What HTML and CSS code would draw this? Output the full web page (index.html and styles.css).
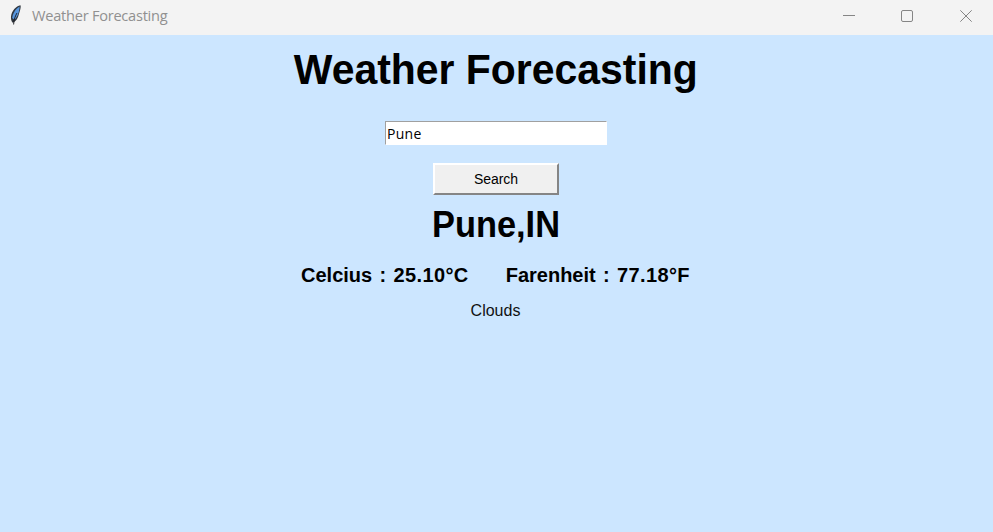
FILE: index.html
```html
<!DOCTYPE html>
<html lang="en">
<head>
<meta charset="utf-8">
<title>Weather Forecasting</title>
<link rel="stylesheet" href="styles.css">
</head>
<body>
<header class="titlebar">
  <svg class="feather" width="14" height="22" viewBox="0 0 14 22">
    <path d="M11.500 1.200C7 1.800 2.600 7 2 12.500c-.2 2.500.3 5 1.700 6.300 1.800-.5 4.800-3.300 5.800-7.300C10.500 8 12.300 3.500 11.500 1.200Z" fill="#30363e"/>
    <path d="M10.600 2.500C6.800 4.500 3.600 9.500 3.200 14l2.200 1.800C8.500 13 10.500 7.500 10.600 2.500Z" fill="#5795dc"/>
    <path d="M8 9C6.500 11.500 4.900 15 4.600 20.500" fill="none" stroke="#17191d" stroke-width=".9"/>
  </svg>
  <span class="caption">Weather Forecasting</span>
  <div class="controls">
    <svg width="12" height="12" viewBox="0 0 12 12"><path d="M0 5.500H12"/></svg>
    <svg width="12" height="12" viewBox="0 0 12 12"><rect x=".5" y=".5" width="11" height="11" rx="1.500"/></svg>
    <svg width="12" height="12" viewBox="0 0 12 12"><path d="M.3.3 11.700 11.700M11.700.3.3 11.700"/></svg>
  </div>
</header>
<main class="content">
  <h1 class="heading">Weather Forecasting</h1>
  <input class="city" type="text" value="Pune" aria-label="City">
  <button class="search">Search</button>
  <h2 class="place">Pune,IN</h2>
  <div class="temps">
    <div>Celcius : <span class="value">25.10°C</span></div>
    <div>Farenheit : <span class="value">77.18°F</span></div>
  </div>
  <p class="condition">Clouds</p>
</main>
</body>
</html>
```
FILE: styles.css
```css
* { box-sizing: border-box; }
body {
  margin: 0;
  height: 532px;
  display: flex;
  flex-direction: column;
  overflow: hidden;
  background: #cce6ff;
  color: #000;
  font-family: "Liberation Sans", Arial, sans-serif;
}
.titlebar {
  flex: none;
  height: 35px;
  display: flex;
  align-items: flex-start;
  background: #f3f3f3;
}
.feather { margin: 4px 0 0 9px; }
.caption {
  margin-left: 9px;
  font: 14.6px/31px "Open Sans", "Noto Sans", sans-serif;
  letter-spacing: -.25px;
  color: #909090;
}
.controls {
  margin: 10px 21px 0 auto;
  display: flex;
}
.controls svg { fill: none; stroke: #858585; stroke-width: 1; }
.controls svg:nth-child(2) { margin: 0 47px 0 46px; }
.content {
  display: flex;
  flex-direction: column;
  align-items: center;
  padding-right: 1px;
}
.heading {
  margin: 11px 1px 0 0;
  font-size: 42.5px;
  line-height: 48px;
  transform: scaleX(.963);
}
.city {
  margin: 27px 0 0;
  width: 222px;
  height: 24px;
  padding: 1px 1px 0;
  border: 1px solid #fff;
  border-top-color: #a0a0a0;
  border-left-color: #a0a0a0;
  border-radius: 0;
  background: #fff;
  font: 14px/20px "Open Sans", sans-serif;
  letter-spacing: .3px;
  color: #000;
  outline: none;
}
.search {
  margin-top: 18px;
  width: 126px;
  height: 32px;
  padding: 0;
  border: 2px solid;
  border-color: #fff #858585 #858585 #fff;
  border-radius: 0;
  background: #f0f0f0;
  font: 14px "Liberation Sans", Arial, sans-serif;
  letter-spacing: -.1px;
  color: #000;
}
.place {
  margin: 9px 0 0;
  font-size: 36px;
  line-height: 42px;
  transform: scaleX(.955);
}
.temps {
  margin: 17px 1px 0 0;
  display: flex;
  gap: 37px;
  font-size: 20px;
  font-weight: bold;
  line-height: 24px;
  word-spacing: 1.7px;
}
.value { letter-spacing: .4px; }
.condition {
  margin: 14px 1px 0 0;
  font-size: 16px;
  line-height: 20px;
  color: #111;
}
```
